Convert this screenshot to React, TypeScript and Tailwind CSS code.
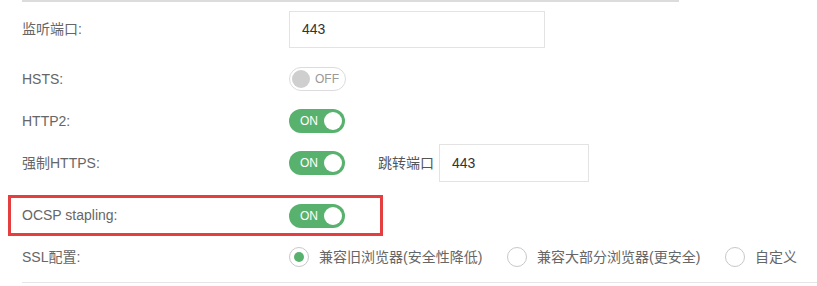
import React from 'react'

const font = { fontFamily: '"Liberation Sans", "Noto Sans CJK SC", Arial, sans-serif' }

function Toggle({ on }: { on: boolean }) {
  if (on) {
    return (
      <div className="flex h-[24px] w-[56px] items-center justify-between rounded-full bg-[#58b26e] pl-[11px] pr-[3px]">
        <span className="text-[12px] leading-none text-white">ON</span>
        <span className="h-[18px] w-[18px] rounded-full bg-white" />
      </div>
    )
  }
  return (
    <div className="flex h-[24px] w-[57px] items-center justify-between rounded-full border border-[#dcdcdc] bg-white pl-[2px] pr-[6px]">
      <span className="h-[18px] w-[18px] rounded-full bg-[#cfcfcf]" />
      <span className="text-[12px] leading-none text-[#999]">OFF</span>
    </div>
  )
}

function Radio({ checked, label, width }: { checked?: boolean; label: string; width?: string }) {
  return (
    <label className={`flex items-center gap-[10px] ${width ?? ''}`}>
      <span className="flex h-[20px] w-[20px] shrink-0 items-center justify-center rounded-full border border-[#c8c8c8] bg-white">
        {checked ? <span className="h-[10px] w-[10px] rounded-full bg-[#58b26e]" /> : null}
      </span>
      <span className="text-[14px] text-[#666]">{label}</span>
    </label>
  )
}

function Label({ children }: { children: React.ReactNode }) {
  return <div className="w-[267px] shrink-0 text-[14px] text-[#666]">{children}</div>
}

export default function App() {
  return (
    <div className="h-[286px] w-[817px] overflow-hidden bg-white pl-[22px]" style={font}>
      <div className="h-[2px] w-[657px] bg-[#dcdcdc]" />

      <div className="mt-[9px] flex h-[37px] items-center">
        <Label>监听端口:</Label>
        <div className="flex h-[37px] w-[256px] items-center border border-[#e3e3e3] px-[12px] text-[14px] text-[#333]">
          443
        </div>
      </div>

      <div className="mt-[10px] flex h-[42px] items-center">
        <Label>HSTS:</Label>
        <Toggle on={false} />
      </div>

      <div className="flex h-[42px] items-center">
        <Label>HTTP2:</Label>
        <Toggle on />
      </div>

      <div className="flex h-[42px] items-center">
        <Label>强制HTTPS:</Label>
        <Toggle on />
        <span className="ml-[33px] mr-[5px] text-[14px] text-[#555]">跳转端口</span>
        <div className="flex h-[38px] w-[150px] items-center border border-[#e3e3e3] px-[12px] text-[14px] text-[#333]">
          443
        </div>
      </div>

      <div className="-ml-[14px] mt-[11px] flex h-[41px] w-[375px] items-center border-[3px] border-[#e53e3e] pl-[11px]">
        <Label>OCSP stapling:</Label>
        <Toggle on />
      </div>

      <div className="flex h-[42px] items-center">
        <Label>SSL配置:</Label>
        <div className="flex items-center">
          <Radio checked label="兼容旧浏览器(安全性降低)" width="w-[218px]" />
          <Radio label="兼容大部分浏览器(更安全)" width="w-[218px]" />
          <Radio label="自定义" />
        </div>
      </div>

      <div className="mt-[4px] h-px w-[795px] bg-[#e5e5e5]" />
    </div>
  )
}
